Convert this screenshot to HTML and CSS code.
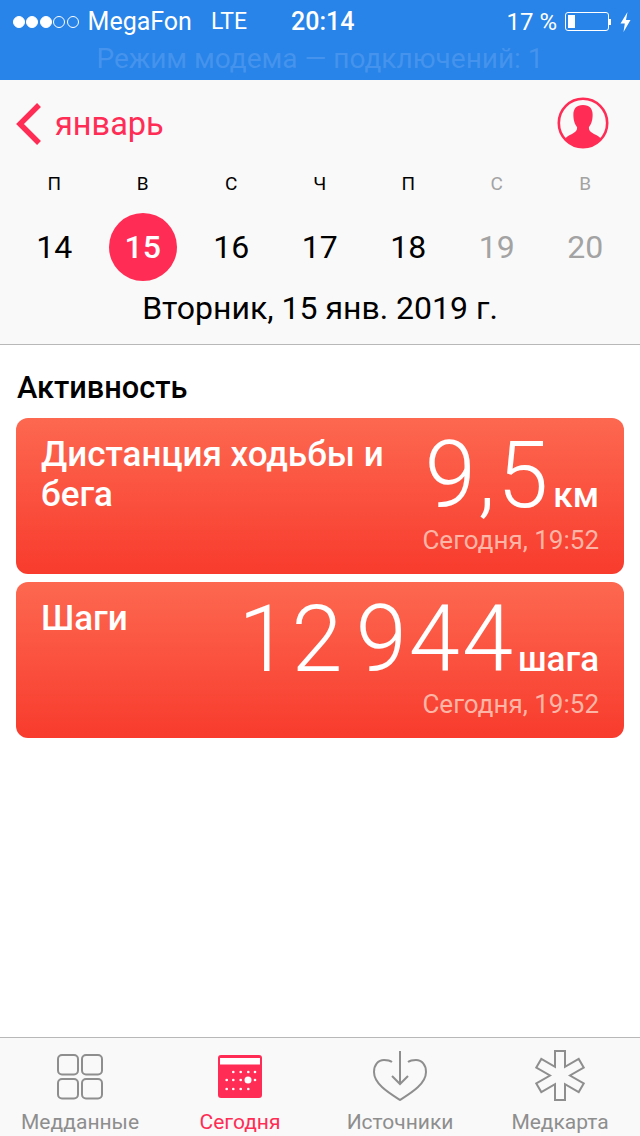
FILE: index.html
```html
<!DOCTYPE html>
<html lang="ru">
<head>
    <meta charset="UTF-8">
    <meta name="viewport" content="width=device-width, initial-scale=1.0">
    <title>Здоровье</title>
    <link rel="stylesheet" href="styles.css">
</head>
<body>

<div class="status-bar">
    <div class="status-row">
        <div class="signal">
            <span class="dot on"></span><span class="dot on"></span><span class="dot on"></span><span class="dot"></span><span class="dot"></span>
        </div>
        <span class="carrier">MegaFon</span>
        <span class="network">LTE</span>
        <span class="clock">20:14</span>
        <span class="percent">17 %</span>
        <div class="battery"><div class="battery-level"></div></div>
        <div class="battery-tip"></div>
        <svg class="bolt" width="11" height="20" viewBox="0 0 11 20"><path d="M7.500 0 L0.500 11.500 H4.800 L3.500 20 L10.500 8 H6 Z" fill="#fff"/></svg>
    </div>
    <div class="hotspot">Режим модема — подключений: 1</div>
</div>

<div class="calendar-head">
    <div class="nav-row">
        <div class="back">
            <svg class="chevron" width="28" height="44" viewBox="0 0 28 44"><path d="M24 3 L5 22 L24 41" fill="none" stroke="#ff2d55" stroke-width="5.500"/></svg>
            <span>январь</span>
        </div>
        <svg class="profile" width="52" height="52" viewBox="0 0 52 52">
            <circle cx="26" cy="26" r="24.200" fill="none" stroke="#ff2d55" stroke-width="2.600"/>
            <path d="M26 8 C33 8 36 12 35.600 19 C35.400 25 33.500 28 32 30 C31.500 33 33 35 37 37 C41 39 43 40 44 42 A24 24 0 0 1 8 42 C9 40 11 39 15 37 C19 35 20.500 33 20 30 C18.500 28 16.600 25 16.400 19 C16 12 19 8 26 8 Z" fill="#ff2d55"/>
        </svg>
    </div>
    <div class="week-letters">
        <span>П</span><span>В</span><span>С</span><span>Ч</span><span>П</span><span class="off">С</span><span class="off">В</span>
    </div>
    <div class="week-days">
        <span>14</span><span class="today">15</span><span>16</span><span>17</span><span>18</span><span class="off">19</span><span class="off">20</span>
    </div>
    <div class="full-date">Вторник, 15 янв. 2019 г.</div>
</div>

<div class="content">
    <h2>Активность</h2>
    <div class="card">
        <div class="card-title">Дистанция ходьбы и бега</div>
        <div class="card-right">
            <div class="value"><span class="number">9,5</span><span class="unit">км</span></div>
            <div class="time">Сегодня, 19:52</div>
        </div>
    </div>
    <div class="card">
        <div class="card-title">Шаги</div>
        <div class="card-right">
            <div class="value"><span class="number">12 944</span><span class="unit">шага</span></div>
            <div class="time">Сегодня, 19:52</div>
        </div>
    </div>
</div>

<div class="tab-bar">
    <div class="tab">
        <svg width="46" height="46" viewBox="0 0 46 46" fill="none" stroke="#8e8e8e" stroke-width="2">
            <rect x="1" y="1" width="20" height="19.500" rx="4"/><rect x="25" y="1" width="20" height="19.500" rx="4"/>
            <rect x="1" y="25" width="20" height="19.500" rx="4"/><rect x="25" y="25" width="20" height="19.500" rx="4"/>
        </svg>
        <span>Медданные</span>
    </div>
    <div class="tab active">
        <svg width="46" height="46" viewBox="0 0 46 46">
            <rect x="1" y="1" width="44" height="43" rx="3" fill="#ff2d55"/>
            <rect x="3" y="4" width="40" height="6.500" fill="#fff"/>
            <g fill="#fff">
                <circle cx="16.300" cy="18" r="1.300"/><circle cx="23.700" cy="18" r="1.300"/><circle cx="31.300" cy="18" r="1.300"/><circle cx="38" cy="18" r="1.300"/>
                <circle cx="9.700" cy="26" r="1.300"/><circle cx="16.300" cy="26" r="1.300"/><circle cx="23.700" cy="26" r="1.300"/><circle cx="31" cy="26" r="3.500"/><circle cx="38" cy="26" r="1.300"/>
                <circle cx="9.700" cy="35" r="1.300"/><circle cx="16.300" cy="35" r="1.300"/><circle cx="23.700" cy="35" r="1.300"/><circle cx="31.300" cy="35" r="1.300"/>
            </g>
        </svg>
        <span>Сегодня</span>
    </div>
    <div class="tab">
        <svg class="low" width="54" height="50" viewBox="0 0 54 50" fill="none" stroke="#8e8e8e" stroke-width="2">
            <path d="M19 11 C17 9.500 14 9 11 9 C5 9 1 14 1 21 C1 33 16 42 27 49 C38 42 53 33 53 21 C53 14 49 9 43 9 C40 9 37 9.500 35 11"/>
            <path d="M27 0 V33 M19 25 L27 33 L35 25"/>
        </svg>
        <span>Источники</span>
    </div>
    <div class="tab">
        <svg class="low" width="50" height="51" viewBox="0 0 50 51" fill="none" stroke="#8e8e8e" stroke-width="2">
            <path d="M20 1 H30 V16.840 L43.700 8.900 L48.700 17.600 L35 25.500 L48.700 33.400 L43.700 42.100 L30 34.160 V50 H20 V34.160 L6.300 42.100 L1.300 33.400 L15 25.500 L1.300 17.600 L6.300 8.900 L20 16.840 Z"/>
        </svg>
        <span>Медкарта</span>
    </div>
</div>

</body>
</html>
```

FILE: styles.css
```css
body {
    margin: 0;
    width: 640px;
    height: 1136px;
    display: flex;
    flex-direction: column;
    background: #fff;
    color: #000;
    font-family: "Roboto", "Liberation Sans", sans-serif;
    overflow: hidden;
}
.status-bar {
    background: #2884e8;
    height: 80px;
    color: #fff;
    flex: none;
}
.status-row {
    height: 43px;
    display: flex;
    align-items: center;
    padding: 0 9px 0 13px;
    font-size: 25px;
}
.signal {
    display: flex;
    gap: 1.400px;
    margin-right: 9px;
}
.dot {
    width: 12px;
    height: 12px;
    box-sizing: border-box;
    border: 1px solid #fff;
    border-radius: 50%;
}
.dot.on {
    background: #fff;
}
.network {
    margin-left: 19px;
    font-size: 23px;
}
.clock {
    margin-left: 44px;
    font-weight: 500;
}
.percent {
    margin-left: auto;
    margin-right: 8px;
    font-size: 24px;
}
.battery {
    width: 44px;
    height: 19px;
    box-sizing: border-box;
    border: 1px solid #fff;
    border-radius: 3px;
    padding: 2px;
}
.battery-level {
    width: 7px;
    height: 100%;
    background: #fff;
}
.battery-tip {
    width: 2px;
    height: 6px;
    background: #fff;
    margin-right: 9px;
}
.hotspot {
    text-align: center;
    font-size: 28px;
    color: #4593ec;
    line-height: 32px;
}
.calendar-head {
    background: #f9f9f9;
    border-bottom: 1px solid #b8b8b8;
    height: 264px;
    flex: none;
}
.nav-row {
    height: 84px;
    box-sizing: border-box;
    padding: 4px 31px 0 15px;
    display: flex;
    align-items: center;
    justify-content: space-between;
}
.back {
    display: flex;
    align-items: center;
    gap: 12px;
    font-size: 32.500px;
    color: #ff2d55;
}
.profile {
    margin-top: -3px;
}
.week-letters, .week-days {
    display: grid;
    grid-template-columns: repeat(7, 88.500px);
    padding-left: 10px;
    text-align: center;
}
.week-letters {
    font-size: 19px;
    line-height: 40px;
}
.week-days {
    font-size: 32px;
    height: 68px;
    line-height: 68px;
    margin-top: 9px;
}
.off {
    color: #a3a3a3;
}
.today {
    width: 68px;
    height: 68px;
    justify-self: center;
    border-radius: 50%;
    background: #ff2d55;
    color: #fff;
    font-weight: 500;
}
.full-date {
    text-align: center;
    font-size: 32px;
    line-height: 54px;
}
.content {
    flex: 1;
    padding: 0 16px;
}
h2 {
    margin: 0;
    padding: 13px 0 1px 1px;
    font-size: 30.700px;
    font-weight: 500;
    line-height: 59px;
}
.card {
    height: 156px;
    box-sizing: border-box;
    margin-bottom: 8px;
    padding: 17px 25px 0;
    border-radius: 12px;
    background: linear-gradient(to bottom, #fd6850, #f83b2d);
    color: #fff;
    display: flex;
    justify-content: space-between;
}
.card-title {
    font-size: 35px;
    font-weight: 500;
    line-height: 40px;
    width: 350px;
}
.card-right {
    text-align: right;
    flex: 1;
    white-space: nowrap;
}
.value {
    height: 78px;
    line-height: 78px;
    margin-top: 2px;
    margin-bottom: 11px;
}
.number {
    font-size: 92px;
    font-weight: 300;
    line-height: 78px;
    letter-spacing: 2px;
    word-spacing: -13px;
}
.unit {
    font-size: 35px;
    font-weight: 500;
    margin-left: 3px;
}
.time {
    font-size: 26px;
    line-height: 28px;
    color: #fdb5a6;
}
.tab-bar {
    height: 98px;
    flex: none;
    background: #f9f9f9;
    border-top: 1px solid #b8b8b8;
    display: grid;
    grid-template-columns: 160px 160px 160px 160px;
}
.tab {
    display: flex;
    flex-direction: column;
    align-items: center;
    justify-content: flex-end;
    gap: 10px;
    font-size: 21px;
    line-height: 25px;
    color: #8e8e8e;
    padding-bottom: 1px;
}
.tab .low {
    margin-bottom: -1px;
}
.tab.active {
    color: #ff2d55;
}
```
